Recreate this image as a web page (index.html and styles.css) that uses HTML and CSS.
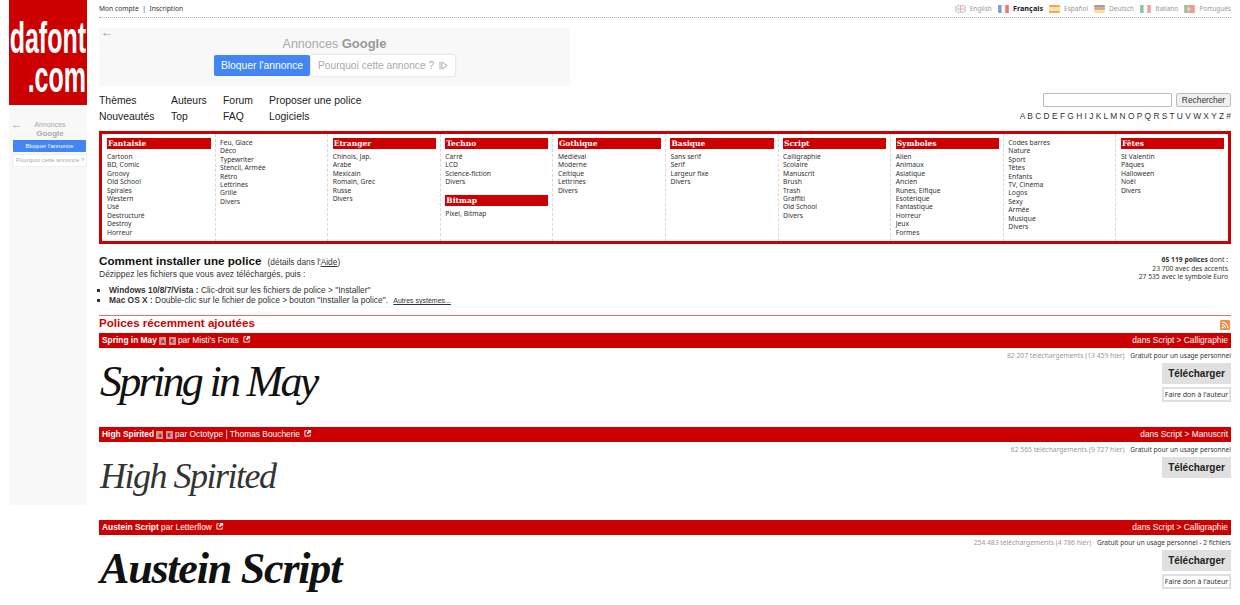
FILE: index.html
```html
<!DOCTYPE html>
<html>
<head>
  <title>dafont.com</title>
  <link rel="stylesheet" href="styles.css">
</head>
<body>
  <div class="page">
    <div class="side">
      <div class="logo"><span>dafont</span><span>.com</span></div>
      <div class="side-ad">
        <div class="side-ad-title">
          <span class="ad-arrow">&#8592;</span>
          <div>Annonces<br><b>Google</b></div>
        </div>
        <div class="side-ad-block">Bloquer l'annonce</div>
        <div class="side-ad-why">Pourquoi cette annonce ?</div>
      </div>
    </div>

    <div class="main">
      <div class="topbar">
        <div><a>Mon compte</a> &nbsp;|&nbsp; <a>Inscription</a></div>
        <div class="langs">
          <span class="lang">
            <svg class="flag" viewBox="0 0 12 9"><rect width="12" height="9" fill="#8fa0c8"/><path d="M0 0L12 9M12 0L0 9" stroke="#fff" stroke-width="1.6"/><path d="M6 0V9M0 4.5H12" stroke="#fff" stroke-width="3"/><path d="M6 0V9M0 4.5H12" stroke="#e28a8a" stroke-width="1.4"/></svg>
            English</span>
          <span class="lang current">
            <svg class="flag" viewBox="0 0 12 9"><rect width="4" height="9" fill="#3f6fd0"/><rect x="4" width="4" height="9" fill="#f4f4f4"/><rect x="8" width="4" height="9" fill="#e8403a"/></svg>
            Français</span>
          <span class="lang">
            <svg class="flag" viewBox="0 0 12 9"><rect width="12" height="9" fill="#ea7a4a"/><rect y="2.3" width="12" height="4.4" fill="#fbe06a"/></svg>
            Español</span>
          <span class="lang">
            <svg class="flag" viewBox="0 0 12 9"><rect width="12" height="3" fill="#777"/><rect y="3" width="12" height="3" fill="#d87a6a"/><rect y="6" width="12" height="3" fill="#f2d66a"/></svg>
            Deutsch</span>
          <span class="lang">
            <svg class="flag" viewBox="0 0 12 9"><rect width="4" height="9" fill="#5fa77a"/><rect x="4" width="4" height="9" fill="#f4f4f4"/><rect x="8" width="4" height="9" fill="#e58080"/></svg>
            Italiano</span>
          <span class="lang">
            <svg class="flag" viewBox="0 0 12 9"><rect width="5" height="9" fill="#6fa878"/><rect x="5" width="7" height="9" fill="#e4746a"/><circle cx="5" cy="4.5" r="2" fill="#edc860"/></svg>
            Português</span>
        </div>
      </div>

      <div class="ad">
        <span class="ad-arrow">&#8592;</span>
        <div class="ad-title">Annonces <b>Google</b></div>
        <div class="ad-buttons">
          <div class="ad-block">Bloquer l'annonce</div>
          <div class="ad-why">Pourquoi cette annonce ?
            <svg class="ad-play" viewBox="0 0 9 9"><path d="M1 .5V8.500M3 1L8 4.500L3 8Z" fill="none" stroke="#aaa"/></svg>
          </div>
        </div>
      </div>

      <div class="navrow">
        <div class="nav">
          <div class="nav-col nav-themes"><a>Thèmes</a><a>Nouveautés</a></div>
          <div class="nav-col nav-auteurs"><a>Auteurs</a><a>Top</a></div>
          <div class="nav-col nav-forum"><a>Forum</a><a>FAQ</a></div>
          <div class="nav-col"><a>Proposer une police</a><a>Logiciels</a></div>
        </div>
        <div class="search">
          <div class="search-form">
            <input type="text" class="search-input">
            <button class="search-btn">Rechercher</button>
          </div>
          <div class="letters">A B C D E F G H I J K L M N O P Q R S T U V W X Y Z #</div>
        </div>
      </div>

      <div class="cats">
        <div class="cat">
          <h4>Fantaisie</h4>
          <a>Cartoon</a><a>BD, Comic</a><a>Groovy</a><a>Old School</a><a>Spirales</a><a>Western</a><a>Usé</a><a>Destructuré</a><a>Destroy</a><a>Horreur</a>
        </div>
        <div class="cat cat-cont">
          <a>Feu, Glace</a><a>Déco</a><a>Typewriter</a><a>Stencil, Armée</a><a>Rétro</a><a>Lettrines</a><a>Grille</a><a>Divers</a>
        </div>
        <div class="cat">
          <h4>Etranger</h4>
          <a>Chinois, Jap.</a><a>Arabe</a><a>Mexicain</a><a>Romain, Grec</a><a>Russe</a><a>Divers</a>
        </div>
        <div class="cat">
          <h4>Techno</h4>
          <a>Carré</a><a>LCD</a><a>Science-fiction</a><a>Divers</a>
          <h4 class="cat-second">Bitmap</h4>
          <a>Pixel, Bitmap</a>
        </div>
        <div class="cat">
          <h4>Gothique</h4>
          <a>Médiéval</a><a>Moderne</a><a>Celtique</a><a>Lettrines</a><a>Divers</a>
        </div>
        <div class="cat">
          <h4>Basique</h4>
          <a>Sans serif</a><a>Serif</a><a>Largeur fixe</a><a>Divers</a>
        </div>
        <div class="cat">
          <h4>Script</h4>
          <a>Calligraphie</a><a>Scolaire</a><a>Manuscrit</a><a>Brush</a><a>Trash</a><a>Graffiti</a><a>Old School</a><a>Divers</a>
        </div>
        <div class="cat">
          <h4>Symboles</h4>
          <a>Alien</a><a>Animaux</a><a>Asiatique</a><a>Ancien</a><a>Runes, Elfique</a><a>Esotérique</a><a>Fantastique</a><a>Horreur</a><a>Jeux</a><a>Formes</a>
        </div>
        <div class="cat cat-cont">
          <a>Codes barres</a><a>Nature</a><a>Sport</a><a>Têtes</a><a>Enfants</a><a>TV, Cinéma</a><a>Logos</a><a>Sexy</a><a>Armée</a><a>Musique</a><a>Divers</a>
        </div>
        <div class="cat">
          <h4>Fêtes</h4>
          <a>St Valentin</a><a>Pâques</a><a>Halloween</a><a>Noël</a><a>Divers</a>
        </div>
      </div>

      <div class="howto">
        <div class="howto-text">
          <h2>Comment installer une police <small>(détails dans l'<u>Aide</u>)</small></h2>
          <p>Dézippez les fichiers que vous avez téléchargés, puis :</p>
          <ul>
            <li><b>Windows 10/8/7/Vista :</b> Clic-droit sur les fichiers de police &gt; "Installer"</li>
            <li><b>Mac OS X :</b> Double-clic sur le fichier de police &gt; bouton "Installer la police". <u class="others">Autres systèmes...</u></li>
          </ul>
        </div>
        <div class="counts">
          <b>65 119 polices</b> dont :<br>
          23 700 avec des accents<br>
          27 535 avec le symbole Euro
        </div>
      </div>

      <div class="recent">
        <h3>Polices récemment ajoutées</h3>
        <svg class="rss" viewBox="0 0 10 10"><rect width="10" height="10" rx="1.500" fill="#f08a3c"/><circle cx="2.700" cy="7.400" r="1" fill="#fff"/><path d="M1.800 4.600A3.600 3.600 0 0 1 5.400 8.200M1.800 2A6.200 6.200 0 0 1 8 8.200" fill="none" stroke="#fff" stroke-width="1.100"/></svg>
      </div>

      <div class="font">
        <div class="font-bar">
          <div><b>Spring in May</b> <i class="tag">à</i> <i class="tag">€</i> par Misti's Fonts
            <svg class="ext" viewBox="0 0 9 9"><path d="M7 5.500V8H1V2H3.500" fill="none" stroke="#fff"/><path d="M4 1H8V5L6.700 3.700L4.500 6L3 4.500L5.300 2.300Z" fill="#fff"/></svg>
          </div>
          <div>dans Script &gt; Calligraphie</div>
        </div>
        <div class="font-body">
          <div class="preview preview-spring">Spring in May</div>
          <div class="font-side">
            <div class="stats"><span class="dl">82 207 téléchargements (13 459 hier)</span> <span class="licence">Gratuit pour un usage personnel</span></div>
            <div class="btn-dl">Télécharger</div>
            <div class="btn-don">Faire don à l'auteur</div>
          </div>
        </div>
      </div>

      <div class="font">
        <div class="font-bar">
          <div><b>High Spirited</b> <i class="tag">à</i> <i class="tag">€</i> par Octotype | Thomas Boucherie
            <svg class="ext" viewBox="0 0 9 9"><path d="M7 5.500V8H1V2H3.500" fill="none" stroke="#fff"/><path d="M4 1H8V5L6.700 3.700L4.500 6L3 4.500L5.300 2.300Z" fill="#fff"/></svg>
          </div>
          <div>dans Script &gt; Manuscrit</div>
        </div>
        <div class="font-body">
          <div class="preview preview-high">High Spirited</div>
          <div class="font-side">
            <div class="stats"><span class="dl">62 565 téléchargements (9 727 hier)</span> <span class="licence">Gratuit pour un usage personnel</span></div>
            <div class="btn-dl">Télécharger</div>
          </div>
        </div>
      </div>

      <div class="font">
        <div class="font-bar">
          <div><b>Austein Script</b> par Letterflow
            <svg class="ext" viewBox="0 0 9 9"><path d="M7 5.500V8H1V2H3.500" fill="none" stroke="#fff"/><path d="M4 1H8V5L6.700 3.700L4.500 6L3 4.500L5.300 2.300Z" fill="#fff"/></svg>
          </div>
          <div>dans Script &gt; Calligraphie</div>
        </div>
        <div class="font-body">
          <div class="preview preview-austein">Austein Script</div>
          <div class="font-side">
            <div class="stats"><span class="dl">254 483 téléchargements (4 786 hier)</span> <span class="licence">Gratuit pour un usage personnel - 2 fichiers</span></div>
            <div class="btn-dl">Télécharger</div>
            <div class="btn-don">Faire don à l'auteur</div>
          </div>
        </div>
      </div>
    </div>
  </div>
</body>
</html>
```

FILE: styles.css
```css
html, body {
  height: 605px;
  overflow: hidden;
}

body {
  margin: 0;
  padding: 0;
  background-color: #ffffff;
  font-family: "Noto Sans", Tahoma, sans-serif;
  font-size: 6.750px;
  color: #333333;
}

.page {
  display: flex;
  padding-left: 9px;
  padding-right: 9px;
}

/* left column */
.side {
  width: 78px;
  flex-shrink: 0;
  margin-right: 12px;
}

.logo {
  height: 105px;
  background-color: #cc0000;
  color: #ffffff;
  font-family: "Liberation Sans", Arial, sans-serif;
  font-weight: bold;
  font-size: 25px;
  line-height: 39px;
  display: flex;
  flex-direction: column;
  align-items: flex-end;
  justify-content: center;
  overflow: hidden;
  padding-top: 8px;
  padding-right: 1px;
  box-sizing: border-box;
}

.logo span {
  display: block;
  transform: scaleY(1.8);
}

.side-ad {
  height: 397px;
  margin-top: 3px;
  background-color: #f8f8f8;
  padding: 12px 1px 0 4px;
  box-sizing: border-box;
  font-family: "Liberation Sans", Arial, sans-serif;
}

.side-ad-title {
  display: flex;
  color: #aaaaaa;
  font-size: 7px;
  line-height: 9px;
  height: 20px;
  text-align: center;
}

.side-ad-title div {
  flex: 1;
  padding-right: 8px;
}

.side-ad-title b {
  font-size: 8px;
}

.side-ad-title .ad-arrow {
  font-size: 11px;
  margin-left: -2px;
}

.side-ad-block {
  height: 12px;
  line-height: 12px;
  background-color: #4285f4;
  color: #ffffff;
  font-size: 6px;
  text-align: center;
  border-radius: 1px;
}

.side-ad-why {
  height: 11px;
  line-height: 11px;
  margin-top: 3px;
  background-color: #ffffff;
  color: #aaaaaa;
  font-size: 6px;
  padding-left: 3px;
  box-shadow: 0 0 1px #bbbbbb;
}

.ad-arrow {
  color: #999999;
  font-size: 10px;
  line-height: 9px;
}

/* main column */
.main {
  flex: 1;
  min-width: 0;
}

.topbar {
  display: flex;
  justify-content: space-between;
  height: 17px;
  line-height: 17px;
  border-bottom: 1px dotted #aaaaaa;
  font-size: 6.700px;
  color: #333333;
}

.langs {
  display: flex;
  gap: 6px;
}

.lang {
  display: flex;
  align-items: center;
  gap: 4px;
  color: #999999;
  font-size: 6.500px;
}

.lang.current {
  color: #222222;
  font-size: 7.300px;
  font-weight: bold;
}

.flag {
  width: 11px;
  height: 8px;
  opacity: 0.7;
}

.ad {
  width: 471px;
  height: 58px;
  margin-top: 10px;
  background-color: #f8f8f8;
  padding: 2px 4px 0;
  box-sizing: border-box;
  font-family: "Liberation Sans", Arial, sans-serif;
  text-align: center;
}

.ad .ad-arrow {
  display: block;
  text-align: left;
  height: 7px;
  line-height: 5px;
  font-size: 12px;
  margin-left: -2px;
}

.ad-title {
  color: #aaaaaa;
  font-size: 12.500px;
  line-height: 14px;
  margin-left: 0;
}

.ad-title b {
  color: #999999;
  font-size: 13px;
}

.ad-buttons {
  display: flex;
  margin-top: 4px;
  padding-left: 111px;
}

.ad-block {
  width: 96px;
  height: 21px;
  line-height: 21px;
  background-color: #4285f4;
  color: #ffffff;
  font-size: 10.300px;
  border-radius: 2px;
}

.ad-why {
  width: 144px;
  height: 21px;
  line-height: 21px;
  margin-left: 1px;
  background-color: #ffffff;
  color: #aaaaaa;
  font-size: 10.200px;
  border-radius: 2px;
  box-shadow: 0 0 2px #bbbbbb;
}

.ad-play {
  width: 9px;
  height: 9px;
  vertical-align: -1px;
  margin-left: 2px;
}

.navrow {
  display: flex;
  justify-content: space-between;
  height: 36px;
  margin-top: 7px;
}

.nav {
  display: flex;
  font-family: "Liberation Sans", Arial, sans-serif;
  font-size: 10.400px;
  line-height: 16px;
  color: #222222;
}

.nav-col a {
  display: block;
}

.nav-themes { width: 72px; }
.nav-auteurs { width: 52px; }
.nav-forum { width: 46px; }

.search {
  text-align: right;
  font-family: "Liberation Sans", Arial, sans-serif;
}

.search-form {
  display: flex;
  justify-content: flex-end;
  gap: 4px;
  margin-bottom: 3px;
}

.search-input {
  width: 129px;
  height: 14px;
  padding: 0;
  box-sizing: border-box;
  border: 1px solid #bbbbbb;
  border-radius: 1px;
  background: #ffffff;
}

.search-btn {
  width: 55px;
  height: 14px;
  padding: 0;
  font-family: "Liberation Sans", Arial, sans-serif;
  font-size: 8.400px;
  color: #333333;
  background-color: #f0f0f0;
  border: 1px solid #bbbbbb;
  border-radius: 2px;
}

.letters {
  font-size: 8.400px;
  line-height: 13px;
  color: #333333;
}

/* categories box */
.cats {
  display: grid;
  grid-template-columns: repeat(10, 1fr);
  height: 113px;
  margin-top: 2px;
  border: 3px solid #cc0000;
  box-sizing: border-box;
  line-height: 8.400px;
}

.cat {
  padding: 4px 4px 0 4.500px;
  border-left: 1px dashed #d8d8d8;
}

.cat:first-child {
  border-left: 0;
  padding-left: 5px;
}

.cat a {
  display: block;
}

.cat h4 {
  margin: 0 0 4px;
  height: 11px;
  line-height: 11px;
  padding-left: 1px;
  background-color: #cc0000;
  color: #ffffff;
  font-family: "DejaVu Serif", Georgia, serif;
  font-size: 7.500px;
  font-weight: bold;
}

.cat h4.cat-second {
  margin-top: 8px;
}

.cat-cont {
  padding-top: 5px;
}

/* how to install */
.howto {
  display: flex;
  justify-content: space-between;
  height: 72px;
  padding-top: 10px;
  box-sizing: border-box;
  border-bottom: 1px solid #e07070;
}

.howto-text {
  font-family: "Liberation Sans", Arial, sans-serif;
  font-size: 8.400px;
  line-height: 10px;
}

.howto h2 {
  margin: 0;
  font-size: 11.650px;
  line-height: 13px;
  color: #111111;
}

.howto small {
  font-size: 8.350px;
  font-weight: normal;
  color: #333333;
  margin-left: 3px;
}

.howto p {
  margin: 0 0 6px;
  font-size: 8.500px;
}

.howto ul {
  margin: 0;
  padding-left: 10px;
  list-style-type: square;
}

.others {
  font-size: 7px;
  margin-left: 3px;
}

.counts {
  padding-top: 2px;
  padding-right: 3px;
  text-align: right;
  line-height: 8.500px;
}

.recent {
  display: flex;
  justify-content: space-between;
  align-items: flex-end;
  height: 17px;
}

.recent h3 {
  margin: 0 0 3px;
  font-family: "Liberation Sans", Arial, sans-serif;
  font-size: 11.600px;
  line-height: 14px;
  color: #cc0000;
}

.rss {
  width: 10px;
  height: 10px;
  margin-right: 1px;
  margin-bottom: 3px;
}

/* font rows */
.font {
  height: 93.500px;
}

.font-bar {
  display: flex;
  justify-content: space-between;
  height: 15px;
  line-height: 15px;
  padding: 0 3px;
  background-color: #cc0000;
  color: #ffffff;
  font-family: "Liberation Sans", Arial, sans-serif;
  font-size: 8.400px;
}

.tag {
  display: inline-block;
  width: 7px;
  height: 8px;
  line-height: 8px;
  font-style: normal;
  font-size: 6px;
  text-align: center;
  background-color: #dd9090;
  color: #550000;
}

.ext {
  width: 8px;
  height: 8px;
  margin-left: 2px;
}

.font-body {
  display: flex;
  justify-content: space-between;
}

.preview {
  font-family: "Liberation Serif", "Times New Roman", serif;
  font-style: italic;
  color: #111111;
  white-space: nowrap;
  padding-left: 1px;
}

.preview-spring {
  font-size: 44px;
  line-height: 50px;
  margin-top: 9px;
  letter-spacing: -2.700px;
}

.preview-high {
  font-size: 36px;
  line-height: 48px;
  margin-top: 10px;
  letter-spacing: -1.500px;
  color: #333333;
}

.preview-austein {
  font-size: 44px;
  line-height: 52px;
  margin-top: 8px;
  letter-spacing: -1.200px;
  font-weight: bold;
}

.font-side {
  display: flex;
  flex-direction: column;
  align-items: flex-end;
}

.stats {
  line-height: 9px;
  margin-top: 3px;
}

.dl {
  color: #999999;
  margin-right: 4px;
}

.licence {
  color: #333333;
  font-size: 6.550px;
}

.btn-dl {
  width: 69px;
  height: 21px;
  line-height: 21px;
  margin-top: 3px;
  background-color: #e0e0e0;
  color: #222222;
  font-family: "Liberation Sans", Arial, sans-serif;
  font-size: 10px;
  font-weight: bold;
  text-align: center;
}

.btn-don {
  width: 69px;
  height: 15px;
  line-height: 11px;
  margin-top: 3px;
  box-sizing: border-box;
  border: 2px solid #e0e0e0;
  text-align: center;
  font-size: 7px;
  color: #333333;
}
```
